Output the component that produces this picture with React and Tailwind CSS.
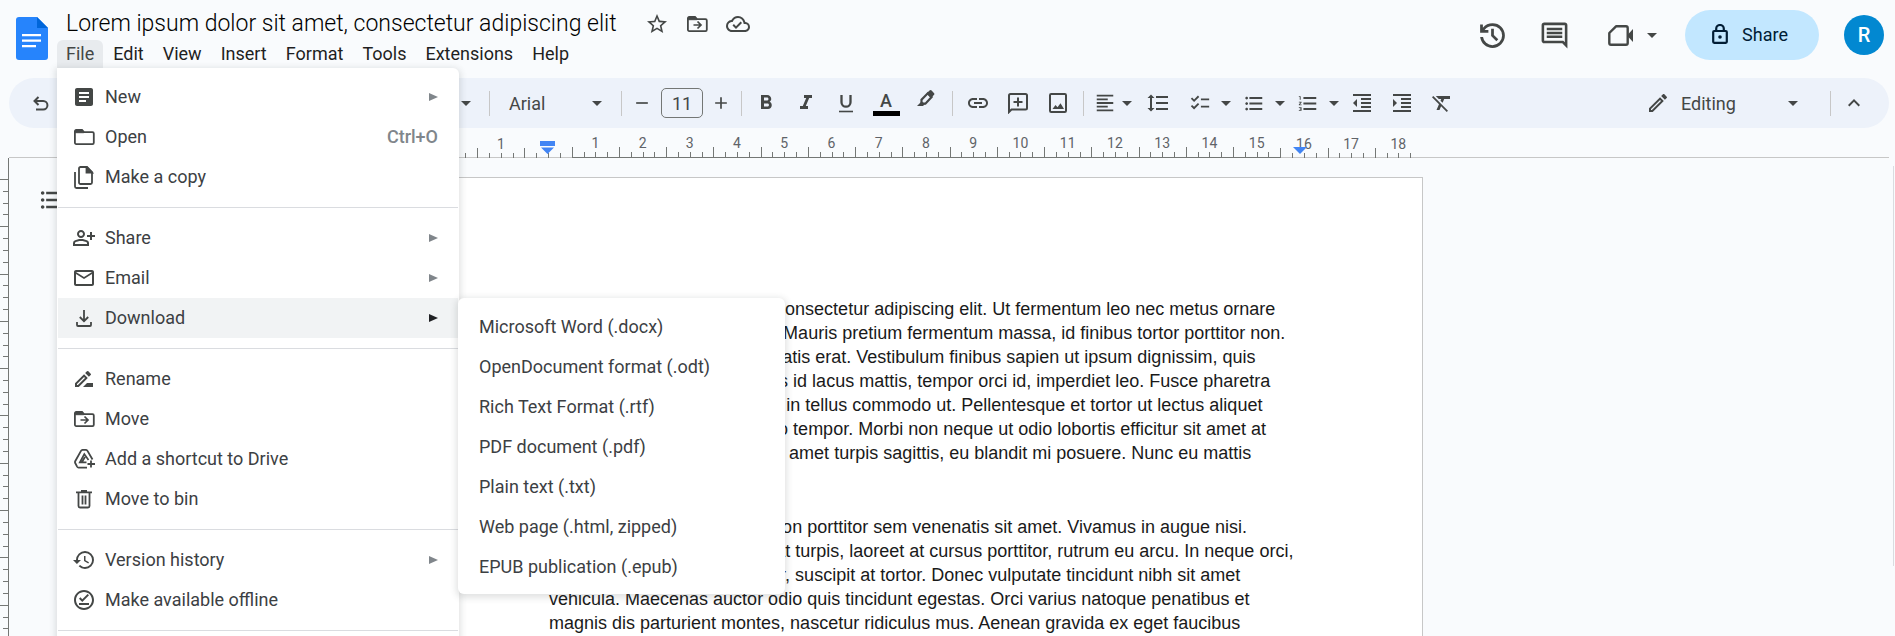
import React, { useState } from 'react';
import {
  MdArticle,
  MdFormatAlignLeft,
  MdFormatBold,
  MdFormatClear,
  MdFormatIndentDecrease,
  MdFormatIndentIncrease,
  MdFormatItalic,
  MdFormatLineSpacing,
  MdFormatListBulleted,
  MdFormatListNumbered,
  MdChecklist,
  MdHistory,
  MdKeyboardArrowUp,
  MdLink,
  MdOutlineCloudDone,
  MdOutlineEdit,
  MdOutlineInsertComment,
  MdMailOutline,
  MdOutlineOfflinePin,
  MdOutlineDriveFileRenameOutline,
  MdOutlinePersonAddAlt,
  MdStarOutline,
  MdAdd,
  MdRemove,
} from 'react-icons/md';

// --- Icons the package does not have ---

const DocsLogo = () => (
  <svg width="32" height="43" viewBox="0 0 32 43" aria-hidden="true">
    <path d="M3 0h18l11 11v29a3 3 0 0 1-3 3H3a3 3 0 0 1-3-3V3a3 3 0 0 1 3-3z" fill="#2684fc" />
    <path d="M21 0l11 11H21z" fill="#0066da" />
    <path d="M6 17h19v2.300H6zM6 22.500h19v2.300H6zM6 28h14v2.300H6z" fill="#fff" />
  </svg>
);

const HistoryIcon = () => (
  <svg width="33" height="33" viewBox="0 0 24 24" fill="currentColor" aria-hidden="true">
    <path d="M12 21q-3.450 0-6.012-2.287T3.050 13H5.100q.350 2.600 2.313 4.300T12 19q2.925 0 4.963-2.037T19 12t-2.037-4.963T12 5q-1.725 0-3.225.800T6.250 8H9v2H3V4h2v2.350q1.275-1.600 3.113-2.475T12 3q1.875 0 3.513.713t2.850 1.924 1.925 2.850T21 12t-.712 3.513-1.925 2.850-2.850 1.925T12 21m2.800-4.800L11 12.400V7h2v4.600l3.200 3.200z" />
  </svg>
);

const MeetIcon = () => (
  <svg width="26" height="21" viewBox="0 0 26 21" aria-hidden="true">
    <path d="M8 1.300h10a1.700 1.700 0 0 1 1.700 1.700v15a1.700 1.700 0 0 1-1.700 1.700H3A1.700 1.700 0 0 1 1.300 18V8z" fill="none" stroke="currentColor" strokeWidth="2.400" strokeLinejoin="round" />
    <path d="M19 10.500l6-6.500v13z" fill="currentColor" />
  </svg>
);

const LockIcon = () => (
  <svg width="16" height="20" viewBox="0 0 16 20" fill="none" stroke="currentColor" aria-hidden="true">
    <rect x="1.200" y="7" width="13.600" height="11.800" rx="1" strokeWidth="2.200" />
    <path d="M4.200 7V4.800a3.800 3.800 0 0 1 7.600 0V7" strokeWidth="2.200" />
    <circle cx="8" cy="13" r="1.800" fill="currentColor" stroke="none" />
  </svg>
);

const UndoIcon = () => (
  <svg width="16" height="15" viewBox="0 0 16 15" fill="none" stroke="currentColor" strokeWidth="2" aria-hidden="true">
    <path d="M5.500 1L1.500 5l4 4M1.500 5h8.700a4.200 4.200 0 0 1 0 8.500H3" />
  </svg>
);

const FolderIcon = ({ arrow }) => (
  <svg width="21" height="16" viewBox="0 0 21 16" fill="none" stroke="currentColor" strokeWidth="1.800" aria-hidden="true">
    <path d="M2 .900h6l2 2.300h8.500a1.300 1.300 0 0 1 1.300 1.300v9.300a1.300 1.300 0 0 1-1.300 1.300H2.200a1.300 1.300 0 0 1-1.300-1.300V2.200A1.300 1.300 0 0 1 2.200.900z" />
    <path d="M1.500 1h6.300l2 2.700H1.500z" fill="currentColor" strokeWidth="1" />
    {arrow && <path d="M6.500 9h7M10.500 5.500L14 9l-3.500 3.500" strokeWidth="1.700" />}
  </svg>
);

const CopyIcon = () => (
  <svg width="20" height="23" viewBox="0 0 20 23" fill="none" stroke="currentColor" strokeWidth="1.800" aria-hidden="true">
    <path d="M6 1h7l5 5v10.500a1.500 1.500 0 0 1-1.500 1.500H6.500A1.500 1.500 0 0 1 5 16.500v-14A1.500 1.500 0 0 1 6.500 1z" />
    <path d="M12.500 1v5.500H18z" fill="currentColor" />
    <path d="M1 6v14.500a1.500 1.500 0 0 0 1.500 1.500H14" />
  </svg>
);

const DownloadIcon = () => (
  <svg width="16" height="17" viewBox="0 0 16 17" fill="none" stroke="currentColor" strokeWidth="1.800" aria-hidden="true">
    <path d="M8 0v11M3.800 7L8 11.200 12.200 7M1 12v3a1 1 0 0 0 1 1h12a1 1 0 0 0 1-1v-3" />
  </svg>
);

const DriveAddIcon = () => (
  <svg width="21" height="20" viewBox="0 0 21 20" fill="none" stroke="currentColor" strokeWidth="1.800" aria-hidden="true">
    <path d="M18.500 10.500L13.500 1.900a2 2 0 0 0-1.500-1H8.500a2 2 0 0 0-1.500 1L1.200 12.200a2 2 0 0 0 0 1.800l1.900 3.600a2 2 0 0 0 1.500 1H13" />
    <path d="M14.500 11l-4.200-6-4.500 8.300h6.700M8 13l3-5" strokeWidth="1.700" />
    <path d="M17 11.500v7M13.500 15H21" />
  </svg>
);

const BinIcon = () => (
  <svg width="16" height="19" viewBox="0 0 16 19" fill="none" stroke="currentColor" strokeWidth="1.800" aria-hidden="true">
    <path d="M0 2.300h16M5 1h6M2.500 2.500V16A1.500 1.500 0 0 0 4 17.500h8a1.500 1.500 0 0 0 1.500-1.500V2.500M6.500 5.500v9M9.500 5.500v9" />
  </svg>
);

const HighlighterIcon = () => (
  <svg width="18" height="18" viewBox="0 0 18 18" aria-hidden="true">
    <path d="M9.500 3.500l3-2.900a1.500 1.500 0 0 1 2.100 0l2.300 2.300a1.500 1.500 0 0 1 0 2.100l-3 3z" fill="currentColor" />
    <path d="M10.800 3.300l3.800 3.800-6.200 6.600H4.500v-4z" fill="none" stroke="currentColor" strokeWidth="2.200" />
    <path d="M4.500 11.500L0 16h6l2-2z" fill="currentColor" />
  </svg>
);

const AddCommentIcon = () => (
  <svg width="20" height="21" viewBox="0 0 20 21" fill="none" stroke="currentColor" strokeWidth="2" aria-hidden="true">
    <path d="M1 19V2.500A1.500 1.500 0 0 1 2.500 1h15A1.500 1.500 0 0 1 19 2.500V15a1.500 1.500 0 0 1-1.500 1.500H3.500z" />
    <path d="M10 4.500v9M5.500 9h9" />
  </svg>
);

const ImageIcon = () => (
  <svg width="18" height="20" viewBox="0 0 18 20" fill="none" stroke="currentColor" strokeWidth="2" aria-hidden="true">
    <rect x="1" y="1" width="16" height="18" rx="1.200" />
    <path d="M3.500 16l3-4 2 2.300 3-4L15 16z" fill="currentColor" stroke="none" />
  </svg>
);

const UnderlineIcon = () => (
  <svg width="16" height="19" viewBox="0 0 16 19" fill="none" stroke="currentColor" aria-hidden="true">
    <path d="M3.500 1v7.200a4.500 4.500 0 0 0 9 0V1" strokeWidth="2.300" />
    <path d="M1 17.500h14" strokeWidth="1.600" />
  </svg>
);

const Caret = () => (
  <svg width="10" height="5" viewBox="0 0 10 5" className="shrink-0" fill="currentColor" aria-hidden="true">
    <path d="M0 0h10L5 5z" />
  </svg>
);

// --- Data ---

const MENUS = ['Edit', 'View', 'Insert', 'Format', 'Tools', 'Extensions', 'Help'];

const FILE_MENU = [
  [
    { label: 'New', icon: <MdArticle size={24} />, sub: true },
    { label: 'Open', icon: <FolderIcon />, shortcut: 'Ctrl+O' },
    { label: 'Make a copy', icon: <CopyIcon /> },
  ],
  [
    { label: 'Share', icon: <MdOutlinePersonAddAlt size={24} />, sub: true },
    { label: 'Email', icon: <MdMailOutline size={24} />, sub: true },
    { label: 'Download', icon: <DownloadIcon />, sub: true },
  ],
  [
    { label: 'Rename', icon: <MdOutlineDriveFileRenameOutline size={24} /> },
    { label: 'Move', icon: <FolderIcon arrow /> },
    { label: 'Add a shortcut to Drive', icon: <DriveAddIcon /> },
    { label: 'Move to bin', icon: <BinIcon /> },
  ],
  [
    { label: 'Version history', icon: <MdHistory size={24} />, sub: true },
    { label: 'Make available offline', icon: <MdOutlineOfflinePin size={24} /> },
  ],
];

const DOWNLOADS = [
  'Microsoft Word (.docx)',
  'OpenDocument format (.odt)',
  'Rich Text Format (.rtf)',
  'PDF document (.pdf)',
  'Plain text (.txt)',
  'Web page (.html, zipped)',
  'EPUB publication (.epub)',
];

const PARAGRAPHS = [
  [
    'Lorem ipsum dolor sit amet, consectetur adipiscing elit. Ut fermentum leo nec metus ornare',
    'sollicitudin vulputate lobortis. Mauris pretium fermentum massa, id finibus tortor porttitor non.',
    'Praesent eu ligula non venenatis erat. Vestibulum finibus sapien ut ipsum dignissim, quis',
    'Curabitur sem cursus dapibus id lacus mattis, tempor orci id, imperdiet leo. Fusce pharetra',
    'consequat euismod vel justo, in tellus commodo ut. Pellentesque et tortor ut lectus aliquet',
    'ullamcorper pharetra diam leo tempor. Morbi non neque ut odio lobortis efficitur sit amet at',
    'Suspendisse fringilla tortor sit amet turpis sagittis, eu blandit mi posuere. Nunc eu mattis',
  ],
  [
    'Vestibulum hendrerit metus non porttitor sem venenatis sit amet. Vivamus in augue nisi.',
    'Aliquam pellentesque placerat turpis, laoreet at cursus porttitor, rutrum eu arcu. In neque orci,',
    'condimentum sagittis pulvinar, suscipit at tortor. Donec vulputate tincidunt nibh sit amet',
    'vehicula. Maecenas auctor odio quis tincidunt egestas. Orci varius natoque penatibus et',
    'magnis dis parturient montes, nascetur ridiculus mus. Aenean gravida ex eget faucibus',
  ],
];

// Ruler cells, one per centimetre, each centred on its number
const RULER = Array.from({ length: 21 }, (_, i) => i - 2);

// --- Pieces ---

const ToolButton = ({ label, className = 'w-10', children }) => (
  <button aria-label={label} className={`flex h-9 shrink-0 items-center justify-center ${className}`}>
    {children}
  </button>
);

const Divider = ({ className }) => <div className={`h-[25px] w-px shrink-0 bg-[#c7c7c7] ${className}`} />;

const MenuItem = ({ item, active, onHover, children }) => (
  <li className="relative" onMouseEnter={onHover}>
    <button className={`flex h-10 w-full items-center pr-5 pl-[14px] text-left ${active ? 'bg-[#f1f3f4]' : ''}`}>
      <span className="flex w-6 items-center justify-center text-[#444746]">{item.icon}</span>
      <span className="ml-[9px] flex-1 pb-0.5">{item.label}</span>
      {item.shortcut && <span className="pb-0.5 font-medium text-[#80868b]">{item.shortcut}</span>}
      {item.sub && (
        <svg width="9" height="8" viewBox="0 0 9 8" className={active ? 'text-[#202124]' : 'text-[#80868b]'} fill="currentColor" aria-hidden="true">
          <path d="M0 0l9 4-9 4z" />
        </svg>
      )}
    </button>
    {children}
  </li>
);

const FileMenu = () => {
  const [open, setOpen] = useState('Download');

  return (
    <div className="absolute top-full left-0 z-20 w-[402px] rounded-b-md rounded-tr-md bg-white px-px py-[9px] text-[18px] text-[#3c4043] shadow-[0_2px_6px_2px_rgba(60,64,67,0.15)]">
      {FILE_MENU.map((group, i) => (
        <React.Fragment key={i}>
          <ul>
            {group.map((item) => (
              <MenuItem key={item.label} item={item} active={open === item.label} onHover={() => item.sub && setOpen(item.label)}>
                {item.label === 'Download' && open === 'Download' && (
                  <ul className="absolute top-0 left-full z-30 w-[327px] rounded-md bg-white py-2 shadow-[0_2px_6px_2px_rgba(60,64,67,0.15)]">
                    {DOWNLOADS.map((name) => (
                      <li key={name}>
                        <button className="flex h-10 w-full items-center px-[21px] text-left">{name}</button>
                      </li>
                    ))}
                  </ul>
                )}
              </MenuItem>
            ))}
          </ul>
          <div className="my-2.5 h-px bg-[#dadce0]" />
        </React.Fragment>
      ))}
    </div>
  );
};

const Header = () => (
  <header className="flex h-[78px] justify-between text-[#444746]">
    <div className="flex pl-4">
      <a href="#home" aria-label="Docs home" className="pt-[17px]">
        <DocsLogo />
      </a>
      <div className="ml-[9px] pt-2">
        <div className="flex h-8 items-center pl-[9px]">
          <h1 className="text-[23px] font-light whitespace-nowrap text-black">Lorem ipsum dolor sit amet, consectetur adipiscing elit</h1>
          <div className="ml-7 flex items-center gap-[18px]">
            <button aria-label="Star"><MdStarOutline size={24} /></button>
            <button aria-label="Move"><FolderIcon arrow /></button>
            <button aria-label="Document status"><MdOutlineCloudDone size={24} /></button>
          </div>
        </div>
        <nav className="flex text-[18px] text-[#1f1f1f]">
          <div className="relative">
            <button className="h-7 rounded-t-md bg-[#e8ebee] px-[9px] pb-0.5 text-[#444746]">File</button>
            <FileMenu />
          </div>
          {MENUS.map((name) => (
            <button key={name} className="h-7 pr-[9px] pb-0.5 pl-2.5">{name}</button>
          ))}
        </nav>
      </div>
    </div>

    <div className="flex h-[70px] items-center pr-[11px]">
      <button aria-label="Version history"><HistoryIcon /></button>
      <button aria-label="Comments" className="ml-[30px]"><MdOutlineInsertComment size={31} /></button>
      <button aria-label="Join a call" className="ml-[38px] flex items-center gap-[13px]">
        <MeetIcon />
        <Caret />
      </button>
      <button className="ml-7 flex h-[50px] w-[134px] items-center justify-center gap-3.5 rounded-full bg-[#c2e7ff] pr-1 pb-0.5 text-[18px] text-[#001d35]">
        <LockIcon />
        Share
      </button>
      <button aria-label="Account" className="ml-[25px] h-10 w-10 rounded-full bg-[#0288d1] text-xl font-medium text-white">R</button>
    </div>
  </header>
);

const Toolbar = () => (
  <div className="mr-1.5 ml-[9px] flex h-[50px] items-center rounded-full bg-[#edf2fa] text-[18px] text-[#444746]">
    <ToolButton label="Undo" className="ml-[13px] w-[38px]"><UndoIcon /></ToolButton>
    <button aria-label="Styles" className="flex h-9 w-[416px] shrink-0 items-center justify-end pr-[5px]"><Caret /></button>
    <Divider className="mr-[14px] ml-[13px]" />
    <button aria-label="Font" className="flex h-9 w-[103px] shrink-0 items-center justify-between px-[5px]">
      Arial
      <Caret />
    </button>
    <Divider className="ml-[14px]" />
    <ToolButton label="Decrease font size" className="w-[39px]"><MdRemove size={20} /></ToolButton>
    <input aria-label="Font size" defaultValue="11" className="h-[30px] w-[42px] shrink-0 rounded-[5px] border border-[#747775] text-center" />
    <ToolButton label="Increase font size" className="w-[35px]"><MdAdd size={20} /></ToolButton>
    <Divider className="mr-1 ml-[3px]" />
    <ToolButton label="Bold"><MdFormatBold size={24} /></ToolButton>
    <ToolButton label="Italic"><MdFormatItalic size={24} /></ToolButton>
    <ToolButton label="Underline"><UnderlineIcon /></ToolButton>
    <ToolButton label="Text colour">
      <span className="flex flex-col items-center">
        <span className="text-[18px] leading-5 font-medium">A</span>
        <span className="h-[5px] w-[27px] bg-black" />
      </span>
    </ToolButton>
    <ToolButton label="Highlight colour" className="w-10 pb-2"><HighlighterIcon /></ToolButton>
    <Divider className="mr-[5px] ml-1.5" />
    <ToolButton label="Insert link"><MdLink size={24} /></ToolButton>
    <ToolButton label="Add comment"><AddCommentIcon /></ToolButton>
    <ToolButton label="Insert image"><ImageIcon /></ToolButton>
    <Divider className="mr-px ml-[5px]" />
    <ToolButton label="Align" className="w-[51px] gap-1.5 pr-1 pl-[9px]"><MdFormatAlignLeft size={24} /><Caret /></ToolButton>
    <ToolButton label="Line spacing" className="w-11"><MdFormatLineSpacing size={24} /></ToolButton>
    <ToolButton label="Checklist" className="w-[54px] gap-2.5 pr-[3px] pl-[9px]"><MdChecklist size={24} /><Caret /></ToolButton>
    <ToolButton label="Bulleted list" className="w-[54px] gap-2.5 pr-[3px] pl-[9px]"><MdFormatListBulleted size={23} /><Caret /></ToolButton>
    <ToolButton label="Numbered list" className="w-[54px] gap-2.5 pr-[3px] pl-[9px]"><MdFormatListNumbered size={23} /><Caret /></ToolButton>
    <ToolButton label="Decrease indent"><MdFormatIndentDecrease size={24} /></ToolButton>
    <ToolButton label="Increase indent"><MdFormatIndentIncrease size={24} /></ToolButton>
    <ToolButton label="Clear formatting"><MdFormatClear size={24} /></ToolButton>

    <button className="ml-auto flex h-9 w-[152px] shrink-0 items-center">
      <MdOutlineEdit size={24} />
      <span className="ml-[11px] flex-1 text-left">Editing</span>
      <Caret />
    </button>
    <Divider className="ml-8" />
    <ToolButton label="Hide the menus" className="mr-3 w-[46px]"><MdKeyboardArrowUp size={24} /></ToolButton>
  </div>
);

const Ruler = () => (
  <div className="mr-1.5 ml-[9px] h-[30px] border-b border-[#c7c7c7]">
    <div className="relative ml-[421px] grid h-[30px] w-[992px] grid-cols-[repeat(21,1fr)] text-sm text-[#5f6368]">
      {RULER.map((n) => (
        <div key={n} className={`flex flex-col items-center justify-end ${n > 0 && n < 16 ? 'border-b border-[#747775]' : ''}`}>
          <span className="-mb-1 leading-4">{n === 0 ? '' : Math.abs(n)}</span>
          <div className="grid h-2.5 w-full grid-cols-4 items-end">
            <div className="h-2.5 border-l border-[#747775]" />
            <div className="h-[5px] border-l border-[#747775]" />
            <div className="h-[5px] border-l border-[#747775]" />
            <div className="h-[5px] border-l border-[#747775]" />
          </div>
        </div>
      ))}
      {/* Indent markers */}
      <svg width="15" height="14" viewBox="0 0 15 14" className="absolute top-[13px] left-[110px]" fill="#4285f4" aria-hidden="true">
        <path d="M0 0h15v5H0zM1 6.500h13L7.500 13z" />
      </svg>
      <svg width="14" height="7" viewBox="0 0 14 7" className="absolute top-[19px] left-[863px]" fill="#4285f4" aria-hidden="true">
        <path d="M0 0h14L7 7z" />
      </svg>
    </div>
  </div>
);

const VerticalRuler = () => (
  <div className="w-[9px] shrink-0 border-r border-[#747775] pt-[21px]">
    <div className="grid h-[473px] grid-rows-[repeat(10,1fr)]">
      {RULER.slice(0, 10).map((n) => (
        <div key={n} className="grid grid-rows-4 justify-items-end">
          <div className="w-2 border-t border-[#747775]" />
          <div className="w-[5px] border-t border-[#747775]" />
          <div className="w-[5px] border-t border-[#747775]" />
          <div className="w-[5px] border-t border-[#747775]" />
        </div>
      ))}
    </div>
  </div>
);

const App = () => (
  <div className="flex h-screen flex-col overflow-hidden bg-[#f9fbfd] font-[Roboto,sans-serif]">
    <Header />
    <Toolbar />
    <Ruler />
    <main className="flex flex-1 overflow-hidden">
      <VerticalRuler />
      <div className="w-[421px] shrink-0 pt-7 pl-[29px] text-[#444746]">
        <button aria-label="Show outline"><MdFormatListBulleted size={28} /></button>
      </div>
      <article className="mt-[19px] h-[1403px] w-[993px] shrink-0 border border-[#c7c7c7] bg-white pt-[119px] pl-[118px] font-['Liberation_Sans',Arial,sans-serif] text-[18px] leading-6 whitespace-nowrap text-[#1a1a1a]">
        {PARAGRAPHS.map((lines, i) => (
          <p key={i} className="mb-[50px]">
            {lines.map((line) => (
              <span key={line} className="block">{line}</span>
            ))}
          </p>
        ))}
      </article>
      <div className="mt-2 ml-auto h-[400px] w-0.5 border-l border-[#dadce0]" />
    </main>
  </div>
);

export default App;
